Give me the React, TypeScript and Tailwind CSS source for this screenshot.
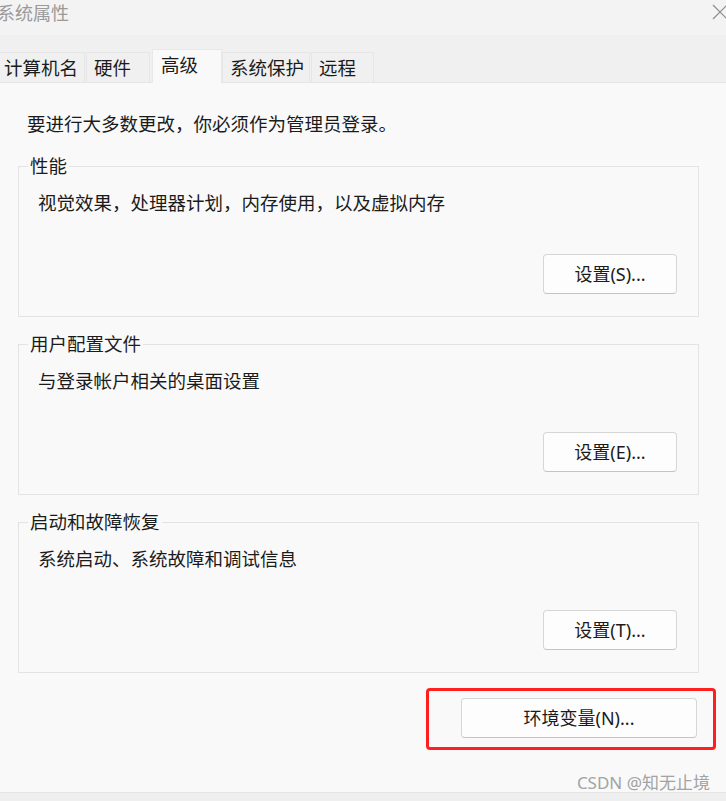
import React from "react";

const font = { fontFamily: '"Noto Sans", "Noto Sans CJK SC", sans-serif' };

// one "设置(X)..." button on the right of a group
const SetupButton = ({ label }: { label: string }) => (
  <button className="h-[40px] w-[134px] rounded-[4px] border border-[#d6d6d6] border-b-[#c4c4c4] bg-[#fdfdfd] text-[18px] leading-[24px] text-[#1b1b1b]">
    {label}
  </button>
);

const Group = ({ title, desc, button }: { title: string; desc: string; button: string }) => (
  <fieldset className="ml-[18px] mr-[27px] mt-[15px] min-w-0 border border-[#e3e3e3] px-0 pb-[22px] pt-0 first:mt-0">
    <legend className="ml-[9px] px-[2px] text-[18.5px] leading-[24px] text-[#1b1b1b]">{title}</legend>
    <p className="ml-[19px] mt-[13px] text-[18.5px] leading-[24px] text-[#1b1b1b]">{desc}</p>
    <div className="mt-[39px] flex justify-end pr-[21px]">
      <SetupButton label={button} />
    </div>
  </fieldset>
);

const App = () => {
  return (
    <div className="flex h-[801px] w-full flex-col overflow-hidden bg-[#f9f9f9]" style={font}>
      {/* ===== title bar ===== */}
      <div className="flex h-[35px] flex-none items-start justify-between bg-[#f3f3f3]">
        <span className="ml-[-3px] pt-[1px] text-[18px] leading-[24px] text-[#9a9a9a]">系统属性</span>
        <svg width="16" height="16" viewBox="0 0 16 16" className="mr-[-2px] mt-[4px] flex-none">
          <path d="M1 1 L15 15 M15 1 L1 15" stroke="#8c8c8c" strokeWidth="1.2" fill="none" />
        </svg>
      </div>

      {/* ===== tabs ===== */}
      <div className="flex h-[48px] flex-none items-end border-b border-[#e5e5e5] bg-[#f0f0f0] text-[18.5px] leading-[24px] text-[#1b1b1b]">
        <div className="ml-[-4px] flex h-[30px] w-[89px] items-center border border-b-0 border-[#e6e6e6] pl-[7px]">计算机名</div>
        <div className="ml-[1px] flex h-[30px] w-[64px] items-center border border-b-0 border-[#e6e6e6] pl-[7px]">硬件</div>
        <div className="mb-[-1px] ml-[2px] flex h-[34px] w-[70px] items-start border border-b-0 border-[#e8e8e8] bg-[#f9f9f9] pl-[8px] pt-[3px]">
          高级
        </div>
        <div className="flex h-[30px] w-[88px] items-center border border-b-0 border-[#e6e6e6] pl-[7px]">系统保护</div>
        <div className="ml-[1px] flex h-[30px] w-[63px] items-center border border-b-0 border-[#e6e6e6] pl-[7px]">远程</div>
      </div>

      {/* ===== content ===== */}
      <div className="flex flex-1 flex-col">
        <p className="ml-[27px] mt-[29px] text-[18.5px] leading-[24px] text-[#1b1b1b]">
          要进行大多数更改，你必须作为管理员登录。
        </p>

        <div className="mt-[18px] flex flex-col">
          <Group title="性能" desc="视觉效果，处理器计划，内存使用，以及虚拟内存" button="设置(S)..." />
          <Group title="用户配置文件" desc="与登录帐户相关的桌面设置" button="设置(E)..." />
          <Group title="启动和故障恢复" desc="系统启动、系统故障和调试信息" button="设置(T)..." />
        </div>

        <div className="mt-[25px] flex justify-end pr-[29px]">
          <div className="relative">
            <button className="h-[40px] w-[236px] rounded-[4px] border border-[#d6d6d6] border-b-[#c4c4c4] bg-[#fdfdfd] text-[18px] leading-[24px] text-[#1b1b1b]">
              环境变量(N)...
            </button>
            {/* red annotation box */}
            <span className="pointer-events-none absolute -bottom-[12px] -left-[35px] -right-[19px] -top-[10px] rounded-[4px] border-[3px] border-[#ff1f1f]" />
          </div>
        </div>

        <div className="mt-auto flex justify-end pr-[16px]">
          <span className="text-[17px] leading-[18px] text-[#a3a3a3]">CSDN @知无止境</span>
        </div>
      </div>

      <div className="h-[9px] flex-none border-t border-[#e5e5e5] bg-[#efefef]" />
    </div>
  );
};

export default App;
